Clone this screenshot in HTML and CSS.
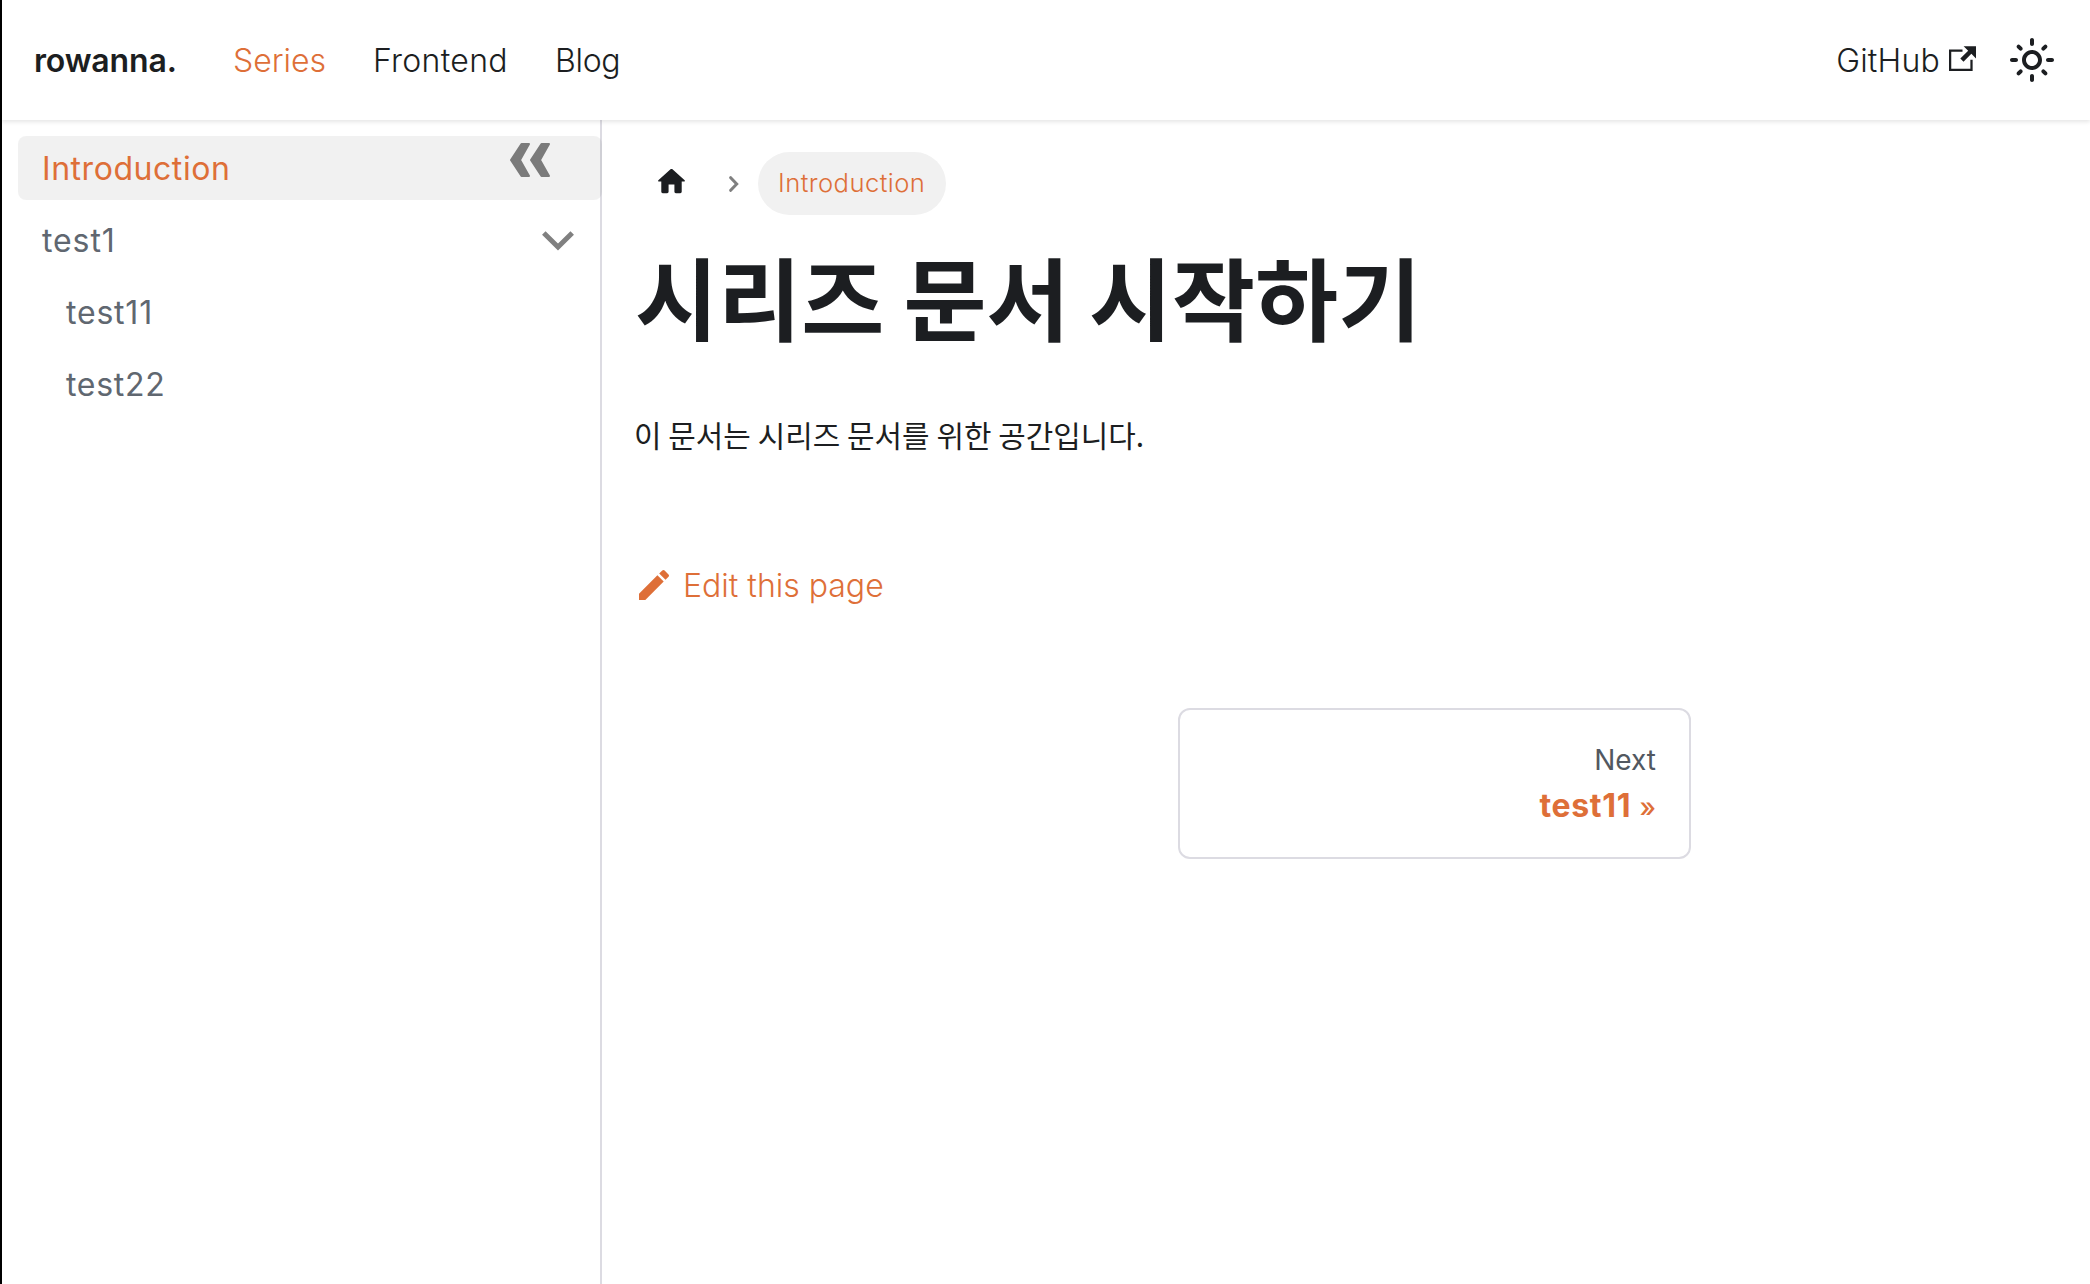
FILE: index.html
```
<!DOCTYPE html>
<html lang="ko">
<head>
<meta charset="utf-8">
<title>시리즈 문서 시작하기 | rowanna.</title>
<link rel="stylesheet" href="styles.css">
</head>
<body>
<header class="navbar">
  <nav class="navbar-links">
    <a class="brand">rowanna.</a>
    <a class="nav-link nav-series">Series</a>
    <a class="nav-link nav-frontend">Frontend</a>
    <a class="nav-link nav-blog">Blog</a>
  </nav>
  <div class="navbar-tools">
    <a class="github">GitHub
      <svg class="icon-external" viewBox="0 0 24 24"><path d="M21 13v10h-21v-19h12v2h-10v15h17v-8h2zm3-12h-10.988l4.035 4-6.977 7.07 2.828 2.828 6.977-7.07 4.125 4.172v-11z"/></svg>
    </a>
    <svg class="icon-sun" viewBox="0 0 24 24"><path d="M12,9c1.65,0,3,1.35,3,3s-1.35,3-3,3s-3-1.35-3-3S10.35,9,12,9 M12,7c-2.76,0-5,2.24-5,5s2.24,5,5,5s5-2.24,5-5S14.76,7,12,7L12,7z M2,13l2,0c0.55,0,1-0.45,1-1s-0.45-1-1-1l-2,0c-0.55,0-1,0.45-1,1S1.45,13,2,13z M20,13l2,0c0.55,0,1-0.45,1-1s-0.45-1-1-1l-2,0c-0.55,0-1,0.45-1,1S19.45,13,20,13z M11,2v2c0,0.55,0.45,1,1,1s1-0.45,1-1V2c0-0.55-0.45-1-1-1S11,1.45,11,2z M11,20v2c0,0.55,0.45,1,1,1s1-0.45,1-1v-2c0-0.55-0.45-1-1-1C11.45,19,11,19.45,11,20z M5.99,4.58c-0.39-0.39-1.03-0.39-1.41,0c-0.39,0.39-0.39,1.03,0,1.41l1.06,1.06c0.39,0.39,1.03,0.39,1.41,0s0.39-1.03,0-1.41L5.99,4.58z M18.36,16.95c-0.39-0.39-1.03-0.39-1.41,0c-0.39,0.39-0.39,1.03,0,1.41l1.06,1.06c0.39,0.39,1.03,0.39,1.41,0c0.39-0.39,0.39-1.03,0-1.41L18.36,16.95z M19.42,5.99c0.39-0.39,0.39-1.03,0-1.41c-0.39-0.39-1.03-0.39-1.41,0l-1.06,1.06c-0.39,0.39-0.39,1.03,0,1.41s1.03,0.39,1.41,0L19.42,5.99z M7.05,18.36c0.39-0.39,0.39-1.03,0-1.41c-0.39-0.39-1.03-0.39-1.41,0l-1.06,1.06c-0.39,0.39-0.39,1.03,0,1.41s1.03,0.39,1.41,0L7.05,18.36z"/></svg>
  </div>
</header>
<div class="layout">
  <aside class="sidebar">
    <a class="menu-item active">Introduction</a>
    <a class="menu-item">test1
      <svg class="icon-caret" viewBox="0 0 32 20"><path d="M1.8 2 16 16 30.2 2"/></svg>
    </a>
    <a class="menu-item nested">test11</a>
    <a class="menu-item nested wide">test22</a>
    <svg class="icon-collapse" viewBox="0 0 40 34"><path d="M11.5 1H19L10 17l9 16h-7.500L1 17zM31.500 1H39L30 17l9 16h-7.500L21 17z"/></svg>
  </aside>
  <main class="content">
    <nav class="breadcrumbs">
      <svg class="icon-home" viewBox="0 0 24 24"><path d="M10 19v-5h4v5c0 .55.45 1 1 1h3c.55 0 1-.45 1-1v-7h1.700c.46 0 .68-.57.33-.87L12.670 3.600c-.38-.34-.96-.34-1.340 0l-8.360 7.530c-.34.3-.13.87.33.87H5v7c0 .55.45 1 1 1h3c.55 0 1-.45 1-1z"/></svg>
      <svg class="icon-next" viewBox="0 0 10 16"><path d="M1.700 1.700 7.700 8 1.700 14.300"/></svg>
      <span class="crumb">Introduction</span>
    </nav>
    <h1 class="title">시리즈 문서 시작하기</h1>
    <p class="lead">이 문서는 시리즈 문서를 위한 공간입니다.</p>
    <a class="edit">
      <svg class="icon-edit" viewBox="0 0 40 40"><path d="m34.5 11.7l-3 3.1-6.3-6.3 3.1-3q0.5-0.5 1.2-0.5t1.1 0.5l3.9 3.9q0.5 0.4 0.5 1.1t-0.5 1.2z m-29.5 17.1l18.4-18.5 6.3 6.3-18.4 18.4h-6.3v-6.2z"/></svg>
      <span class="edit-text">Edit this page</span>
    </a>
    <a class="pager">
      <span class="pager-sub">Next</span>
      <span class="pager-label">test11 <span class="pager-arrow">»</span></span>
    </a>
  </main>
</div>
</body>
</html>
```
FILE: styles.css
```
* { box-sizing: border-box; }
body {
  margin: 0;
  height: 1284px;
  display: flex;
  flex-direction: column;
  border-left: 2px solid #000;
  background: #fff;
  color: #1c1e21;
  font: 350 32px/48px Inter, "Noto Sans CJK KR", sans-serif;
  overflow: hidden;
}
svg { display: block; flex: none; fill: currentColor; }

.navbar {
  position: relative;
  z-index: 1;
  flex: none;
  height: 120px;
  padding: 0 34px 0 32px;
  display: flex;
  align-items: center;
  justify-content: space-between;
  background: #fff;
  box-shadow: 0 2px 4px rgba(0, 0, 0, .1);
}
.navbar-links, .navbar-tools, .github { display: flex; align-items: center; }
.navbar-links { padding-top: 2px; }
.brand { width: 199px; font-weight: 630; letter-spacing: -.15px; }
.nav-series { width: 140px; color: #de6f38; }
.nav-frontend { width: 182px; letter-spacing: .3px; }
.nav-blog { letter-spacing: -.3px; }
.github { padding-top: 2px; letter-spacing: .2px; gap: 9px; }
.icon-external { width: 27px; height: 27px; margin-top: -5px; }
.icon-sun { width: 48px; height: 48px; margin-left: 32px; }

.layout { flex: 1; display: flex; }
.sidebar {
  position: relative;
  flex: none;
  width: 600px;
  padding: 16px 0 0 16px;
  border-right: 2px solid #dcdbe2;
  color: #606770;
  font-weight: 400;
}
.menu-item {
  height: 64px;
  margin: 0 -2px 8px 0;
  padding: 2px 28px 0 24px;
  display: flex;
  align-items: center;
  justify-content: space-between;
  border-radius: 8px;
  letter-spacing: .9px;
}
.active { background: rgba(0, 0, 0, .055); color: #de6f38; letter-spacing: .55px; font-weight: 380; }
.nested { padding-left: 48px; letter-spacing: .8px; }
.wide { letter-spacing: .7px; }
.icon-caret { width: 32px; height: 20px; fill: none; stroke: #808080; stroke-width: 5; }
.icon-collapse {
  position: absolute;
  left: 508px;
  top: 23px;
  width: 40px;
  height: 34px;
  fill: #7b7b7b;
  stroke: #7b7b7b;
  stroke-width: 2;
  stroke-linejoin: round;
}

.content { flex: 1; padding: 32px 0 0 33px; display: flex; flex-direction: column; align-items: flex-start; }
.breadcrumbs { height: 63px; padding-left: 19px; display: flex; align-items: center; }
.icon-home { width: 35px; height: 35px; margin-top: -5px; }
.icon-next { width: 10px; height: 16px; margin: 1px 19px 0 40px; fill: none; stroke: #7f7f7f; stroke-width: 3; stroke-linecap: round; }
.crumb {
  height: 63px;
  width: 188px;
  padding-left: 20px;
  border-radius: 32px;
  background: #f1f1f1;
  color: #de6f38;
  font-size: 25.6px;
  line-height: 61px;
  letter-spacing: .45px;
  font-weight: 330;
}
.title { margin: 24px 0 0; font: 700 90.3px/112px "Noto Sans CJK KR", sans-serif; word-spacing: -6px; }
.lead { margin: 59px 0 0 -1px; font: 400 29.9px/48px "Noto Sans CJK KR", sans-serif; word-spacing: -1.5px; }
.edit { margin: 102px 0 0 -1px; display: flex; align-items: center; gap: 9px; color: #de6f38; font-weight: 340; }
.edit-text { padding-top: 2px; }
.icon-edit { width: 40px; height: 40px; margin-top: -1px; }
.pager {
  width: 513px;
  height: 151px;
  margin: 98px 0 0 543px;
  padding: 30px 33px;
  display: flex;
  flex-direction: column;
  align-items: flex-end;
  gap: 6px;
  border: 2px solid #dcdbe2;
  border-radius: 12px;
  line-height: 40px;
}
.pager-sub { color: #525860; font-size: 28px; font-weight: 400; }
.pager-label { color: #de6f38; font-weight: 650; letter-spacing: .7px; }
.pager-arrow { font-size: 27px; font-weight: 550; letter-spacing: 0; }
```
